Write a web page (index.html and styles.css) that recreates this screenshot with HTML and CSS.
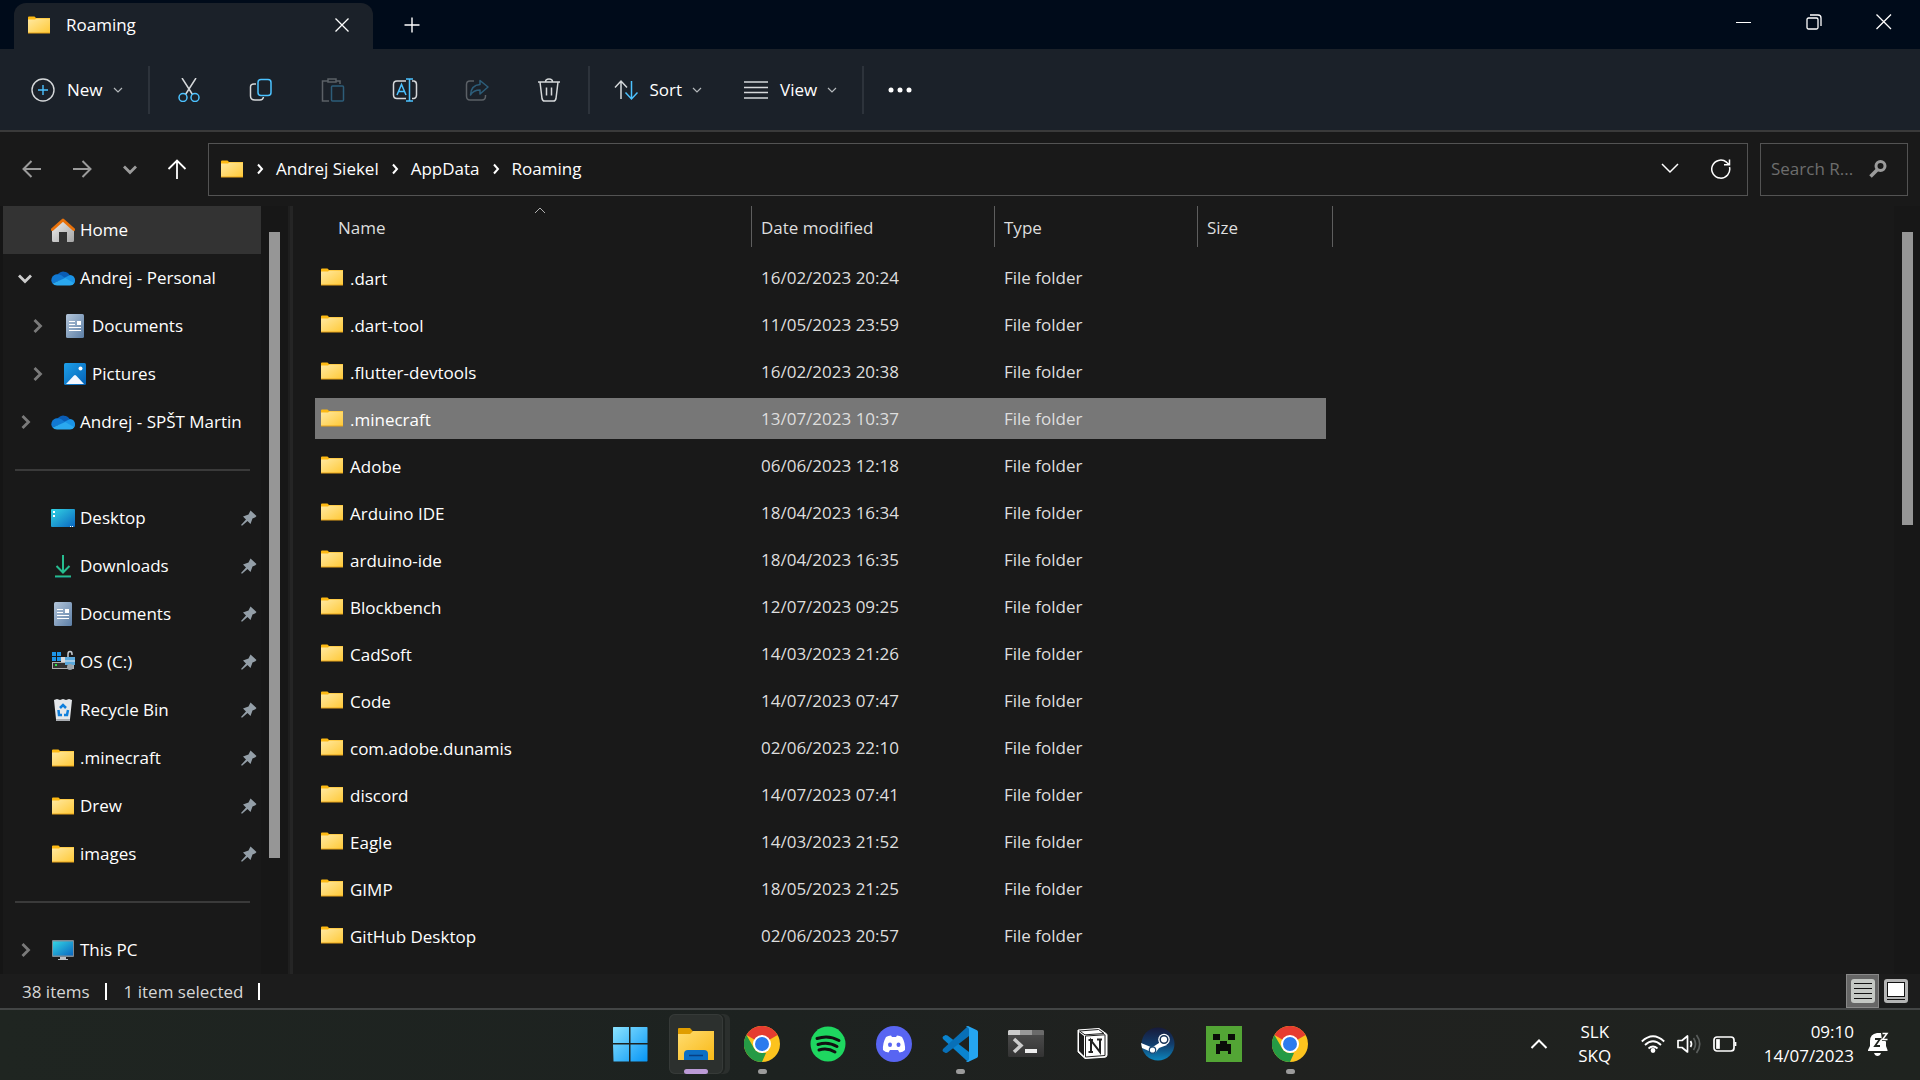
FILE: index.html
```html
<!DOCTYPE html>
<html lang="en">
<head>
  <meta charset="UTF-8">
  <title>Roaming</title>
  <meta name="viewport" content="width=device-width, initial-scale=1.0">
  <link rel="stylesheet" href="styles.css">
</head>
<body>
  <!-- Shared icons -->
  <svg class="sprite" aria-hidden="true">
    <defs>
      <linearGradient id="g-folder" x1="0" y1="0" x2="1" y2="1"><stop offset="0" stop-color="#ffe9a2"/><stop offset="1" stop-color="#ffc937"/></linearGradient>
      <linearGradient id="g-bigfolder" x1="0" y1="0" x2="1" y2="1"><stop offset="0" stop-color="#ffdc70"/><stop offset="1" stop-color="#f9b916"/></linearGradient>
      <linearGradient id="g-doc" x1="0" y1="0" x2="1" y2="1"><stop offset="0" stop-color="#b4c6da"/><stop offset="1" stop-color="#5c7ea6"/></linearGradient>
      <linearGradient id="g-pic" x1="0" y1="0" x2="1" y2="1"><stop offset="0" stop-color="#1ea0ea"/><stop offset="1" stop-color="#0461b5"/></linearGradient>
      <linearGradient id="g-desk" x1="0" y1="0" x2="1" y2="1"><stop offset="0" stop-color="#33d4e4"/><stop offset="1" stop-color="#0a66c0"/></linearGradient>
      <linearGradient id="g-win" x1="0" y1="0" x2="1" y2="1"><stop offset="0" stop-color="#8be3ff"/><stop offset="1" stop-color="#0695f5"/></linearGradient>
      <linearGradient id="g-house" x1="0" y1="0" x2="1" y2="1"><stop offset="0" stop-color="#f0f0f0"/><stop offset="1" stop-color="#a5a5a5"/></linearGradient>
      <linearGradient id="g-down" x1="0" y1="0" x2="0" y2="1"><stop offset="0" stop-color="#36cf8a"/><stop offset="1" stop-color="#12a5a0"/></linearGradient>
      <linearGradient id="g-steam" x1="0" y1="0" x2="0" y2="1"><stop offset="0" stop-color="#171a3a"/><stop offset=".5" stop-color="#123c6b"/><stop offset="1" stop-color="#0d86bd"/></linearGradient>
      <linearGradient id="g-term" x1="0" y1="0" x2="0" y2="1"><stop offset="0" stop-color="#505050"/><stop offset="1" stop-color="#333"/></linearGradient>
    </defs>
    <symbol id="folder" viewBox="0 0 24 24">
      <path d="M1 4.500Q1 3.500 2 3.500H7.500L9 5H23V10H1Z" fill="#fdb913"/>
      <path d="M1 6.500H8L9.500 5.500H23V20H1Z" fill="url(#g-folder)"/>
      <path d="M1 19.500H23V20.500H1Z" fill="#e8a41b"/>
    </symbol>
    <symbol id="home" viewBox="0 0 24 24">
      <path d="M1 11L12 1.500L23 11V22.500Q23 24 21.500 24H16V14H8V24H2.500Q1 24 1 22.500Z" fill="url(#g-house)"/>
      <path d="M1.300 11.500L12 2L22.700 11.500" fill="none" stroke="#e8710a" stroke-width="3" stroke-linecap="round" stroke-linejoin="round"/>
    </symbol>
    <symbol id="cloud" viewBox="0 0 24 24">
      <path d="M6.500 8.500A7.500 7.500 0 0 1 19 9.500L15 17H7Z" fill="#0a5cb4"/>
      <path d="M6 8.200A5.900 5.900 0 0 0 1.500 17.500L14.500 12.500Q10 8 6 8.200Z" fill="#1179d3"/>
      <path d="M13 12L19 9A5.500 5.500 0 0 1 23.500 17L20 18Z" fill="#1a93e6"/>
      <path d="M1.500 17.500L14.200 12L23.300 17.300Q22 19.500 19 19.500H6Q3 19.500 1.500 17.500Z" fill="#2aa8ef"/>
    </symbol>
    <symbol id="doc" viewBox="0 0 24 24">
      <rect x="3" width="18" height="24" rx="1.500" fill="url(#g-doc)"/>
      <path d="M6 7.500H12M6 10.500H12M6 13.500H18M6 16.500H18" stroke="#fff" stroke-width="1.200"/>
      <rect x="14" y="7" width="4" height="4" fill="#fff"/>
    </symbol>
    <symbol id="picture" viewBox="0 0 24 24">
      <rect x="1" y="1" width="22" height="22" rx="1.500" fill="url(#g-pic)"/>
      <path d="M3 22L11 13.500Q12 12.500 13 13.500L21 22Z" fill="#f3f7ff"/>
      <circle cx="17.500" cy="6.500" r="2" fill="#fff"/>
    </symbol>
    <symbol id="desktop" viewBox="0 0 24 24">
      <rect y="3" width="24" height="18" rx="1" fill="url(#g-desk)"/>
      <path d="M2 5H4V7H2ZM2 9H4V11H2ZM19 20H20V21H19ZM21 20H22V21H21Z" fill="#fff"/>
    </symbol>
    <symbol id="download" viewBox="0 0 24 24">
      <path d="M12 1V18M5.500 12L12 18.500L18.500 12" fill="none" stroke="#27bd90" stroke-width="2"/>
      <path d="M4 21.500H20V23.500H4Z" fill="url(#g-down)"/>
    </symbol>
    <symbol id="drive" viewBox="0 0 24 24">
      <path d="M1 2H5V6H1ZM6 2H10V6H6ZM1 7H5V11H1ZM6 7H10V11H6Z" fill="#1d95e8"/>
      <path d="M10 7H15V12H10Z" fill="#dadada"/>
      <rect x="1" y="12" width="22" height="7" fill="#b0b0b0"/>
      <rect x="2" y="13" width="16" height="5" fill="#333"/>
      <rect x="4" y="14" width="2" height="2" fill="#31e044"/>
      <path d="M17 8V4Q17 1.500 19 1.500T21 4V5" fill="none" stroke="#c5ccd2" stroke-width="1.500"/>
      <rect x="14" y="7" width="10" height="8" fill="#5ba9dc"/>
      <path d="M14 10H24V12H14Z" fill="#a4cae5"/>
      <circle cx="19" cy="17" r="3" fill="#9ba4ab"/>
    </symbol>
    <symbol id="bin" viewBox="0 0 24 24">
      <path d="M3 2L6 1L9 2L12 1L15 2L18 1L21 2L18.800 23H5.200Z" fill="#e4e7ea"/>
      <path d="M5 21H19L18.800 23H5.200Z" fill="#a9adb2"/>
      <path d="M9 10L12 7L15 10M17 12L16 17H13M11 17H8L7.500 12" fill="none" stroke="#0f7fdc" stroke-width="2.500"/>
    </symbol>
    <symbol id="pc" viewBox="0 0 24 24">
      <path d="M9 19H15V21H17V22H7V21H9Z" fill="#b9bec3"/>
      <rect x="1" y="2" width="22" height="17" rx="1" fill="#7e8b95"/>
      <rect x="2" y="3.500" width="20" height="14" fill="url(#g-desk)"/>
    </symbol>
    <symbol id="pin" viewBox="0 0 16 16">
      <path d="M9.500 .5L15.500 6Q14 8 11.500 8.500L9.500 14L6.500 11L1 15.800L0 15L5 9.500L2 6.500L7.500 4.500Z" fill="#949fa8"/>
    </symbol>
    <symbol id="chev-right" viewBox="0 0 14 14"><path d="M4.500 1L10.500 7L4.500 13" fill="none" stroke="currentColor" stroke-width="2.800"/></symbol>
    <symbol id="chev-down" viewBox="0 0 14 14"><path d="M1 4.500L7 10.500L13 4.500" fill="none" stroke="currentColor" stroke-width="2.800"/></symbol>
    <symbol id="caret" viewBox="0 0 10 10"><path d="M1 3L5 7L9 3" fill="none" stroke="#b4b8bb" stroke-width="1.200"/></symbol>
    <symbol id="crumb" viewBox="0 0 8 12"><path d="M2 1.500L6 6L2 10.500" fill="none" stroke="#fff" stroke-width="2"/></symbol>
    <symbol id="chrome" viewBox="0 0 36 36">
      <circle cx="18" cy="18" r="18" fill="#fcc31e"/>
      <path d="M18 18L2.400 9A18 18 0 0 1 33.600 9Z" fill="#e63c30"/>
      <path d="M2.400 9L10.200 22.500Q13 27 18 27L22 27L18 36A18 18 0 0 1 2.400 9Z" fill="#259a45"/>
      <circle cx="18" cy="18" r="9" fill="#fff"/>
      <circle cx="18" cy="18" r="7" fill="#2b7bee"/>
    </symbol>
  </svg>

  <header class="titlebar">
    <div class="tab">
      <svg class="icon24"><use href="#folder"/></svg>
      <span class="tab-title">Roaming</span>
      <button class="tab-close" aria-label="Close tab">
        <svg width="14" height="14" viewBox="0 0 14 14"><path d="M.5 .5L13.500 13.500M13.500 .5L.5 13.500" stroke="#fff" stroke-width="1.300"/></svg>
      </button>
    </div>
    <button class="tab-new" aria-label="New tab">
      <svg width="16" height="16" viewBox="0 0 16 16"><path d="M8 .5V15.500M.5 8H15.500" stroke="#fff" stroke-width="1.400"/></svg>
    </button>
    <div class="window-buttons">
      <button aria-label="Minimize"><svg width="16" height="16" viewBox="0 0 16 16"><path d="M0 8.500H15" stroke="#fff"/></svg></button>
      <button aria-label="Restore"><svg width="16" height="16" viewBox="0 0 16 16" fill="none" stroke="#fff" stroke-width="1.300"><rect x="1" y="4" width="11" height="11" rx="1.500"/><path d="M4 1H12Q15 1 15 4V12"/></svg></button>
      <button aria-label="Close"><svg width="16" height="16" viewBox="0 0 16 16"><path d="M.5 .5L15 15M15 .5L.5 15" stroke="#fff" stroke-width="1.300"/></svg></button>
    </div>
  </header>

  <div class="toolbar">
    <button class="menu-btn new-btn">
      <svg width="24" height="24" viewBox="0 0 24 24" fill="none" stroke-width="1.400"><circle cx="12" cy="12" r="11" stroke="#d5d8da"/><path d="M12 7V17M7 12H17" stroke="#4cc2ff"/></svg>
      New
      <svg class="caret"><use href="#caret"/></svg>
    </button>
    <div class="sep"></div>
    <div class="tools">
      <button aria-label="Cut">
        <svg width="24" height="24" viewBox="0 0 24 24" fill="none" stroke-width="1.500"><path d="M5 0L15.500 16.500M19 0L8.500 16.500" stroke="#d5d8da"/><circle cx="6" cy="19.500" r="4" stroke="#4cc2ff"/><circle cx="18" cy="19.500" r="4" stroke="#4cc2ff"/></svg>
      </button>
      <button aria-label="Copy">
        <svg width="24" height="24" viewBox="0 0 24 24" fill="none" stroke-width="1.500"><path d="M7 6H5Q1.500 6 1.500 9V18Q1.500 22 6 22H11Q14 22 14.500 19" stroke="#d5d8da"/><rect x="9" y="1.500" width="13" height="16" rx="3" stroke="#4cc2ff"/></svg>
      </button>
      <button aria-label="Paste" disabled>
        <svg width="24" height="24" viewBox="0 0 24 24" fill="none" stroke-width="1.500"><path d="M7 3H1.500V23H8M15 3H19V6M7 1H15V4H7Z" stroke="#5b6066"/><rect x="10.500" y="8" width="12" height="15" rx="1" stroke="#2d5d79"/></svg>
      </button>
      <button aria-label="Rename">
        <svg width="26" height="24" viewBox="0 0 26 24" fill="none" stroke-width="1.500"><path d="M14 3H5Q1.500 3 1.500 6.500V17Q1.500 20.500 5 20.500H14M20 3H22Q24.500 3.500 24.500 6.500V17Q24.500 20 22 20.500H20" stroke="#d5d8da"/><path d="M17.500 1V23M14 1H21M14 23H21M5 17L9.500 6.500L14 17M6.500 13.500H12.500" stroke="#4cc2ff"/></svg>
      </button>
      <button aria-label="Share" disabled>
        <svg width="24" height="24" viewBox="0 0 24 24" fill="none" stroke-width="1.500" stroke-linejoin="round"><path d="M9 3H5Q1.500 3 1.500 6.500V18Q1.500 22 5 22H17Q20.500 22 20.500 18V17" stroke="#5b6066"/><path d="M15 2.500L23 9L15 16V12Q8.500 12 5.500 17Q6 7 15 6.500Z" stroke="#2d5d79"/></svg>
      </button>
      <button aria-label="Delete">
        <svg width="24" height="24" viewBox="0 0 24 24" fill="none" stroke="#d5d8da" stroke-width="1.500"><path d="M1 4H23M8.500 4Q8.500 1 12 1T15.500 4M3 4L5 20.500Q5.500 23 7.500 23H16.500Q18.500 23 19 20.500L21 4M9.500 9.500V17.500M14.500 9.500V17.500"/></svg>
      </button>
    </div>
    <div class="sep"></div>
    <button class="menu-btn sort-btn">
      <svg width="24" height="24" viewBox="0 0 24 24" fill="none" stroke-width="1.500"><path d="M7 21V3M1 9.500L7 3L13 9.500" stroke="#d5d8da"/><path d="M17.500 3V21M11.500 14.500L17.500 21L23.500 14.500" stroke="#4cc2ff"/></svg>
      Sort
      <svg class="caret"><use href="#caret"/></svg>
    </button>
    <button class="menu-btn view-btn">
      <svg width="24" height="24" viewBox="0 0 24 24" stroke="#d5d8da" stroke-width="1.500"><path d="M0 4H24M0 9.500H24M0 14.500H24M0 20H24"/></svg>
      View
      <svg class="caret"><use href="#caret"/></svg>
    </button>
    <div class="sep"></div>
    <button class="more-btn" aria-label="See more">
      <svg width="24" height="6" viewBox="0 0 24 6" fill="#fff"><circle cx="3" cy="3" r="2.500"/><circle cx="12" cy="3" r="2.500"/><circle cx="21" cy="3" r="2.500"/></svg>
    </button>
  </div>

  <div class="navrow">
    <div class="history">
      <button aria-label="Back"><svg width="20" height="20" viewBox="0 0 20 20" fill="none" stroke="#9b9b9b" stroke-width="2"><path d="M19 10H2M9.500 2L1.500 10L9.500 18"/></svg></button>
      <button aria-label="Forward"><svg width="20" height="20" viewBox="0 0 20 20" fill="none" stroke="#9b9b9b" stroke-width="2"><path d="M1 10H18M10.500 2L18.500 10L10.500 18"/></svg></button>
      <button class="recent" aria-label="Recent locations"><svg width="14" height="14"><use href="#chev-down"/></svg></button>
      <button aria-label="Up"><svg width="20" height="20" viewBox="0 0 20 20" fill="none" stroke="#fff" stroke-width="1.800"><path d="M10 20V1.500M1.500 10L10 1.500L18.500 10"/></svg></button>
    </div>
    <nav class="address" aria-label="Address">
      <svg class="icon24"><use href="#folder"/></svg>
      <svg class="crumb"><use href="#crumb"/></svg>
      <a href="#">Andrej Siekel</a>
      <svg class="crumb"><use href="#crumb"/></svg>
      <a href="#">AppData</a>
      <svg class="crumb"><use href="#crumb"/></svg>
      <a href="#">Roaming</a>
      <div class="address-actions">
        <button aria-label="Previous locations"><svg width="18" height="18" viewBox="0 0 18 18"><path d="M1 4L9 12L17 4" fill="none" stroke="#fff" stroke-width="1.500"/></svg></button>
        <button aria-label="Refresh"><svg width="20" height="20" viewBox="0 0 20 20" fill="none" stroke="#fff" stroke-width="1.500"><path d="M18.500 8A9 9 0 1 1 15.500 3.200L18 5.500M18.500 .5V5.800H13"/></svg></button>
      </div>
    </nav>
    <label class="search">
      <input type="text" placeholder="Search R..." aria-label="Search Roaming">
      <svg width="18" height="18" viewBox="0 0 18 18" fill="none" stroke="#9b9b9b"><circle cx="11.500" cy="6" r="4.500" stroke-width="3"/><path d="M8 10L1.500 16.500" stroke-width="3.500"/></svg>
    </label>
  </div>

  <main class="content">
    <nav class="sidebar">
      <a class="side-item active" href="#"><svg class="chev"></svg><svg class="icon24"><use href="#home"/></svg><span>Home</span></a>
      <a class="side-item open" href="#"><svg class="chev"><use href="#chev-down"/></svg><svg class="icon24"><use href="#cloud"/></svg><span>Andrej - Personal</span></a>
      <a class="side-item child" href="#"><svg class="chev"><use href="#chev-right"/></svg><svg class="icon24"><use href="#doc"/></svg><span>Documents</span></a>
      <a class="side-item child" href="#"><svg class="chev"><use href="#chev-right"/></svg><svg class="icon24"><use href="#picture"/></svg><span>Pictures</span></a>
      <a class="side-item" href="#"><svg class="chev"><use href="#chev-right"/></svg><svg class="icon24"><use href="#cloud"/></svg><span>Andrej - SPŠT Martin</span></a>
      <hr>
      <a class="side-item" href="#"><svg class="chev"></svg><svg class="icon24"><use href="#desktop"/></svg><span>Desktop</span><svg class="pin"><use href="#pin"/></svg></a>
      <a class="side-item" href="#"><svg class="chev"></svg><svg class="icon24"><use href="#download"/></svg><span>Downloads</span><svg class="pin"><use href="#pin"/></svg></a>
      <a class="side-item" href="#"><svg class="chev"></svg><svg class="icon24"><use href="#doc"/></svg><span>Documents</span><svg class="pin"><use href="#pin"/></svg></a>
      <a class="side-item" href="#"><svg class="chev"></svg><svg class="icon24"><use href="#drive"/></svg><span>OS (C:)</span><svg class="pin"><use href="#pin"/></svg></a>
      <a class="side-item" href="#"><svg class="chev"></svg><svg class="icon24"><use href="#bin"/></svg><span>Recycle Bin</span><svg class="pin"><use href="#pin"/></svg></a>
      <a class="side-item" href="#"><svg class="chev"></svg><svg class="icon24"><use href="#folder"/></svg><span>.minecraft</span><svg class="pin"><use href="#pin"/></svg></a>
      <a class="side-item" href="#"><svg class="chev"></svg><svg class="icon24"><use href="#folder"/></svg><span>Drew</span><svg class="pin"><use href="#pin"/></svg></a>
      <a class="side-item" href="#"><svg class="chev"></svg><svg class="icon24"><use href="#folder"/></svg><span>images</span><svg class="pin"><use href="#pin"/></svg></a>
      <hr>
      <a class="side-item" href="#"><svg class="chev"><use href="#chev-right"/></svg><svg class="icon24"><use href="#pc"/></svg><span>This PC</span></a>
    </nav>
    <div class="scroll side-scroll"><div class="thumb"></div></div>
    <div class="splitter"></div>

    <section class="files">
      <table>
        <colgroup><col class="col-name"><col class="col-date"><col class="col-type"><col class="col-size"></colgroup>
        <thead>
          <tr>
            <th>Name<svg class="sort-mark" viewBox="0 0 12 7"><path d="M1 6L6 1L11 6" fill="none" stroke="#b0b0b0"/></svg></th>
            <th>Date modified</th><th>Type</th><th>Size</th>
          </tr>
        </thead>
        <tbody>
          <tr><td><svg class="icon24"><use href="#folder"/></svg>.dart</td><td>16/02/2023 20:24</td><td>File folder</td><td></td></tr>
          <tr><td><svg class="icon24"><use href="#folder"/></svg>.dart-tool</td><td>11/05/2023 23:59</td><td>File folder</td><td></td></tr>
          <tr><td><svg class="icon24"><use href="#folder"/></svg>.flutter-devtools</td><td>16/02/2023 20:38</td><td>File folder</td><td></td></tr>
          <tr class="selected"><td><svg class="icon24"><use href="#folder"/></svg>.minecraft</td><td>13/07/2023 10:37</td><td>File folder</td><td></td></tr>
          <tr><td><svg class="icon24"><use href="#folder"/></svg>Adobe</td><td>06/06/2023 12:18</td><td>File folder</td><td></td></tr>
          <tr><td><svg class="icon24"><use href="#folder"/></svg>Arduino IDE</td><td>18/04/2023 16:34</td><td>File folder</td><td></td></tr>
          <tr><td><svg class="icon24"><use href="#folder"/></svg>arduino-ide</td><td>18/04/2023 16:35</td><td>File folder</td><td></td></tr>
          <tr><td><svg class="icon24"><use href="#folder"/></svg>Blockbench</td><td>12/07/2023 09:25</td><td>File folder</td><td></td></tr>
          <tr><td><svg class="icon24"><use href="#folder"/></svg>CadSoft</td><td>14/03/2023 21:26</td><td>File folder</td><td></td></tr>
          <tr><td><svg class="icon24"><use href="#folder"/></svg>Code</td><td>14/07/2023 07:47</td><td>File folder</td><td></td></tr>
          <tr><td><svg class="icon24"><use href="#folder"/></svg>com.adobe.dunamis</td><td>02/06/2023 22:10</td><td>File folder</td><td></td></tr>
          <tr><td><svg class="icon24"><use href="#folder"/></svg>discord</td><td>14/07/2023 07:41</td><td>File folder</td><td></td></tr>
          <tr><td><svg class="icon24"><use href="#folder"/></svg>Eagle</td><td>14/03/2023 21:52</td><td>File folder</td><td></td></tr>
          <tr><td><svg class="icon24"><use href="#folder"/></svg>GIMP</td><td>18/05/2023 21:25</td><td>File folder</td><td></td></tr>
          <tr><td><svg class="icon24"><use href="#folder"/></svg>GitHub Desktop</td><td>02/06/2023 20:57</td><td>File folder</td><td></td></tr>
        </tbody>
      </table>
    </section>
    <div class="scroll file-scroll"><div class="thumb"></div></div>
  </main>

  <div class="statusbar">
    <span class="status-text">38 items</span>
    <span class="status-text">1 item selected</span>
    <div class="view-modes">
      <button class="on" aria-label="Details view"><svg width="24" height="24" viewBox="0 0 24 24"><rect width="24" height="24" rx="3" fill="#c4c8c4"/><path d="M3 4.500H21M3 9.500H21M3 14.500H21M3 19.500H21" stroke="#111" stroke-width="1.200"/></svg></button>
      <button aria-label="Large icons view"><svg width="24" height="24" viewBox="0 0 24 24"><rect width="24" height="24" rx="3" fill="#b4b4b4"/><rect x="3.500" y="3.500" width="17" height="14" fill="#fff" stroke="#111"/><path d="M3 20.500H21" stroke="#111"/></svg></button>
    </div>
  </div>

  <footer class="taskbar">
    <div class="apps">
      <button aria-label="Start"><svg width="36" height="36" viewBox="0 0 36 36"><path d="M1.500 1H17V17H1V1.500ZM18.500 1H35L35.500 1.500V17H18.500ZM1 18.500H17V35.500H1.500ZM18.500 18.500H35.500V35L35 35.500H18.500Z" fill="url(#g-win)"/></svg></button>
      <button class="current" aria-label="File Explorer"><svg width="36" height="36" viewBox="0 0 36 36"><path d="M0 3Q0 2 1 2H12L15.500 6H35V12H0Z" fill="#e09d00"/><path d="M0 8H12L15 5H36V34H0Z" fill="url(#g-bigfolder)"/><path d="M6 34V28Q6 24 10 24H26Q30 24 30 28V34Z" fill="#0d6fc4"/><path d="M11 29.500H25" stroke="#083f83" stroke-width="1.500"/></svg></button>
      <button class="running" aria-label="Google Chrome"><svg width="36" height="36"><use href="#chrome"/></svg></button>
      <button aria-label="Spotify"><svg width="36" height="36" viewBox="0 0 36 36"><circle cx="18" cy="18" r="17.500" fill="#1ed760"/><path d="M7 12.500Q18.500 8.500 29 14.500M8 18.500Q18 15 27 20.500M9 24Q17.500 21.500 25 26" fill="none" stroke="#111" stroke-width="3" stroke-linecap="round"/></svg></button>
      <button aria-label="Discord"><svg width="36" height="36" viewBox="0 0 36 36"><circle cx="18" cy="18" r="18" fill="#5865f2"/><path d="M10 11Q12 9.800 15 9.500L16 11H20L21 9.500Q24 9.800 26 11Q29.500 17 29 24Q27 26 23.500 26.500L22 24H14L12.500 26.500Q9 26 7 24Q6.500 17 10 11Z" fill="#fff"/><ellipse cx="14" cy="18.800" rx="2" ry="2.300" fill="#5865f2"/><ellipse cx="22.500" cy="18.800" rx="2" ry="2.300" fill="#5865f2"/></svg></button>
      <button class="running" aria-label="Visual Studio Code"><svg width="36" height="36" viewBox="0 0 36 36"><path d="M1 10.500L3.500 9Q4.500 9 5.500 9.500L27 26V35.500L24.500 34.500L1 13Q0 11.500 1 10.500Z" fill="#0a84cf"/><path d="M1 25.500L3.500 27Q4.500 27 5.500 26.500L27 10V.5L24.500 1.500L1 23Q0 24.500 1 25.500Z" fill="#0870b8"/><path d="M26 0L35 4.200Q36 5 36 6V30Q36 31 35 31.800L26 36Q24.500 36 24 35Q27 35 27 32.500V3.500Q27 1 24 1Q24.500 0 26 0Z" fill="#25a5f1"/></svg></button>
      <button aria-label="Terminal"><svg width="36" height="36" viewBox="0 0 36 36"><rect y="4" width="36" height="27" rx="1.500" fill="url(#g-term)"/><path d="M1 4H12V9H0V5Z" fill="#ccc"/><path d="M12 4H24V9H12Z" fill="#999"/><path d="M24 4H35L36 5V9H24Z" fill="#6a6a6a"/><path d="M6 13L13 19.500L6 26" fill="none" stroke="#ccc" stroke-width="3.500"/><rect x="17" y="23" width="12" height="4" fill="#eee"/></svg></button>
      <button aria-label="Notion"><svg width="36" height="36" viewBox="0 0 36 36"><path d="M4 4L25 2.500L32 7.500Q33 8 33 9V29Q33 31 31 31.200L11 32.500L4 26Z" fill="#fff" stroke="#fff" stroke-linejoin="round"/><path d="M5.500 5L24.500 3.500L30 7.500L11 8.800Z" fill="#fff" stroke="#222"/><path d="M5 6L10 10V30L5 25Z" fill="#1c1c1c"/><path d="M11.500 10L31 8.800V29.500L11.500 31Z" fill="#fff" stroke="#222"/><path d="M17 26V14.500L26 26V13M14.500 14H19M23 13.500H28M14.500 26H19" fill="none" stroke="#222" stroke-width="2"/></svg></button>
      <button aria-label="Steam"><svg width="36" height="36" viewBox="0 0 36 36"><circle cx="18" cy="18" r="16.500" fill="url(#g-steam)"/><path d="M1 17L12 21.500L19 17L20 12L27 19L19 22L16 26Q12 29 9 25L2 22Z" fill="#fff"/><circle cx="24" cy="13.500" r="5.800" fill="#fff"/><circle cx="24" cy="13.500" r="3.800" fill="#fff" stroke="#173358" stroke-width="1.500"/><circle cx="12.500" cy="24" r="3.200" fill="none" stroke="#1a4672" stroke-width="1.200"/></svg></button>
      <button aria-label="Minecraft Launcher"><svg width="36" height="36" viewBox="0 0 36 36" shape-rendering="crispEdges"><path d="M0 0H36V36H0Z" fill="#53a535"/><path d="M7 8H14V14H7ZM22 8H29V14H22ZM14 15H21V18H25V28H22V25H14V28H10V18H14Z" fill="#0a0d08"/></svg></button>
      <button class="running" aria-label="Google Chrome profile"><svg width="36" height="36"><use href="#chrome"/></svg></button>
    </div>
    <div class="tray">
      <button class="tray-up" aria-label="Show hidden icons"><svg width="18" height="18" viewBox="0 0 18 18"><path d="M1.500 13L9 5.500L16.500 13" fill="none" stroke="#fff" stroke-width="2"/></svg></button>
      <button class="lang">SLK<br>SKQ</button>
      <button class="quick" aria-label="Network, volume and battery">
        <svg width="24" height="24" viewBox="0 0 24 24" fill="none" stroke="#fff" stroke-width="1.800"><path d="M.8 9.500Q12 -1 23.200 9.500M4 13Q12 5.500 20 13M7.500 16.500Q12 12.500 16.500 16.500"/><circle cx="12" cy="18.500" r="1.500" fill="#fff"/></svg>
        <svg width="24" height="24" viewBox="0 0 24 24" fill="none" stroke="#fff" stroke-width="1.700" stroke-linejoin="round"><path d="M1 8.500H5L10.500 4V20L5 15.500H1Z"/><path d="M13.500 9Q15.500 12 13.500 15"/><path d="M16.500 6Q20.500 12 16.500 18M19.500 3Q26 12 19.500 21" stroke="#5a5e5c"/></svg>
        <svg width="24" height="24" viewBox="0 0 24 24" fill="none" stroke="#fff" stroke-width="1.700"><rect x="1" y="5" width="20" height="14" rx="3"/><path d="M22.500 10V14"/><rect x="4" y="8" width="2" height="8" fill="#fff"/></svg>
      </button>
      <button class="clock">09:10<br>14/07/2023</button>
      <button class="bell" aria-label="Notifications"><svg width="22" height="24" viewBox="0 0 22 24"><path d="M1 18L3 14V9Q3 2 10 1H14L19 10V14L20.500 18V19H1ZM7 21H14Q13 24 10.500 24T7 21Z" fill="#fff"/><path d="M8 7H13L8 14H13" fill="none" stroke="#20241f" stroke-width="1.800"/><path d="M14 0H21V9H15Z" fill="#20241f"/><path d="M15.500 1.500H20L15.500 7.500H20.500" fill="none" stroke="#fff" stroke-width="1.500"/></svg></button>
    </div>
  </footer>
</body>
</html>
```
FILE: styles.css
```css
* {
  box-sizing: border-box;
}

body {
  margin: 0;
  min-height: 100vh;
  display: flex;
  flex-direction: column;
  background: #191919;
  color: #fff;
  font-family: "Open Sans", "Noto Sans", sans-serif;
  font-size: 17px;
  line-height: 24px;
}

button {
  display: flex;
  align-items: center;
  justify-content: center;
  padding: 0;
  border: none;
  background: none;
  color: inherit;
  font: inherit;
}

a {
  color: inherit;
  text-decoration: none;
}

svg {
  flex-shrink: 0;
}

.sprite {
  position: absolute;
  width: 0;
  height: 0;
}

.icon24 {
  width: 24px;
  height: 24px;
}

/* title bar */
.titlebar {
  display: flex;
  height: 49px;
  padding-left: 14px;
  background: #000b1a;
}

.tab {
  display: flex;
  align-items: center;
  width: 359px;
  margin-top: 3px;
  padding: 0 24px 2px 13px;
  background: #1b2129;
  border-radius: 12px 12px 0 0;
}

.tab-title {
  margin-left: 15px;
  font-weight: 500;
}

.tab-close {
  margin-left: auto;
}

.tab-new {
  width: 78px;
}

.window-buttons {
  display: flex;
  height: 43px;
  margin-left: auto;
  padding-right: 1px;
}

.window-buttons button {
  width: 70px;
}

/* command bar */
.toolbar {
  display: flex;
  align-items: center;
  height: 83px;
  padding-left: 31px;
  background: #1b2129;
  border-bottom: 2px solid #3a3a3a;
}

.sep {
  width: 2px;
  height: 48px;
  background: #2d333b;
}

.menu-btn {
  gap: 12px;
  height: 48px;
}

.caret {
  width: 10px;
  height: 10px;
  margin-left: -2px;
}

.new-btn {
  margin-right: 25px;
}

.tools {
  display: flex;
  padding: 0 3px;
}

.tools button {
  width: 72px;
  height: 48px;
}

.sort-btn {
  margin-left: 24px;
  margin-right: 42px;
}

.view-btn {
  margin-right: 25px;
}

.more-btn {
  width: 72px;
  height: 48px;
}

/* navigation row */
.navrow {
  display: flex;
  align-items: center;
  gap: 12px;
  height: 74px;
  padding: 0 12px 0 22px;
}

.history {
  display: flex;
  align-items: center;
  justify-content: space-between;
  width: 165px;
  margin-right: 9px;
}

.recent {
  color: #9b9b9b;
}

.address {
  display: flex;
  align-items: center;
  flex: 1;
  height: 53px;
  padding-left: 11px;
  border: 1px solid #535353;
}

.crumb {
  width: 8px;
  height: 12px;
  margin: 0 12px;
}

.address-actions {
  display: flex;
  gap: 32px;
  margin-left: auto;
  padding-right: 16px;
}

.search {
  display: flex;
  align-items: center;
  width: 148px;
  height: 53px;
  padding: 0 20px 0 10px;
  border: 1px solid #535353;
}

.search input {
  flex: 1;
  min-width: 0;
  padding: 0;
  border: none;
  outline: none;
  background: none;
  color: #fff;
  font: inherit;
}

.search input::placeholder {
  color: #6d6d6d;
}

/* main area */
.content {
  display: flex;
  flex: 1;
}

.sidebar {
  width: 261px;
  border-left: 3px solid #151515;
}

.side-item {
  display: flex;
  align-items: center;
  height: 48px;
  padding: 0 4px 0 15px;
  white-space: nowrap;
}

.side-item.active {
  background: #333;
}

.side-item span {
  margin-left: 5px;
}

.side-item.child {
  padding-left: 27px;
}

.chev {
  width: 14px;
  height: 14px;
  margin-right: 19px;
  color: #7a7a7a;
}

.open .chev {
  color: #ccc;
}

.pin {
  width: 16px;
  height: 16px;
  margin-left: auto;
}

.sidebar hr {
  height: 2px;
  margin: 23px 11px 23px 12px;
  border: none;
  background: #3a3a3a;
}

.scroll {
  display: grid;
  background: #171717;
}

.side-scroll {
  grid-template-rows: 26px 625fr 116fr;
  width: 27px;
  padding: 0 8px;
}

.file-scroll {
  grid-template-rows: 26px 293fr 449fr;
  width: 26px;
  padding: 0 7px 0 8px;
}

.thumb {
  grid-row: 2;
  background: #969696;
}

.splitter {
  width: 5px;
  background: #252525;
  border-left: 2px solid #1f1f1f;
}

.files {
  flex: 1;
  padding-left: 22px;
}

table {
  table-layout: fixed;
  width: 1018px;
  border-spacing: 0;
}

.col-name {
  width: 437px;
}

.col-date {
  width: 243px;
}

.col-type {
  width: 203px;
}

th {
  position: relative;
  height: 48px;
  padding: 0 9px 5px;
  text-align: left;
  font-weight: 400;
  color: #dedede;
  background: linear-gradient(#5e5e5e, #5e5e5e) right top / 1px 41px no-repeat;
}

th:first-child {
  padding-left: 23px;
}

.sort-mark {
  position: absolute;
  top: 1px;
  left: 219px;
  width: 12px;
  height: 7px;
}

td {
  height: 47px;
  padding: 0 9px;
  border: solid transparent;
  border-width: 3px 0;
  background-clip: padding-box;
  color: #dedede;
}

td:first-child {
  padding-left: 5px;
  color: #fff;
}

td:last-child {
  border-right-width: 7px;
}

td .icon24 {
  margin-right: 6px;
  vertical-align: -4px;
}

.selected td {
  background-color: #777;
}

/* status bar */
.statusbar {
  display: flex;
  align-items: center;
  height: 36px;
  padding-left: 22px;
  background: #1c1c1c;
  border-bottom: 2px solid #434545;
  color: #d6d6d6;
}

.status-text {
  margin-right: 17px;
  padding-right: 15px;
  line-height: 17px;
  border-right: 2px solid #fff;
}

.view-modes {
  display: flex;
  align-self: stretch;
  gap: 5px;
  margin-left: auto;
  padding-right: 12px;
}

.view-modes .on {
  width: 33px;
  background: #666;
  border: 1px solid #888;
}

/* taskbar */
.taskbar {
  display: grid;
  grid-template-columns: 1fr auto 1fr;
  height: 70px;
  background: linear-gradient(90deg, #1f2521, #1d2220 40%, #20211f 65%, #1f231f);
}

.apps {
  grid-column: 2;
  display: flex;
  align-items: center;
  gap: 6px;
  padding-bottom: 2px;
}

.apps button {
  position: relative;
  width: 60px;
  height: 60px;
  border-radius: 6px;
}

/* second card edge: more than one window is open */
.apps .current {
  width: 54px;
  margin: 0 3px;
  background: #2c302e;
  box-shadow: inset 0 0 0 1px #363a38, 2px 0 0 #1f2321, 7px 0 0 #2b2f2d;
}

.running::after,
.current::after {
  content: "";
  position: absolute;
  bottom: 0;
  left: calc(50% - 4px);
  width: 9px;
  height: 5px;
  border-radius: 3px;
  background: #9b9b9b;
}

.current::after {
  left: calc(50% - 12px);
  width: 24px;
  background: #bb9ad6;
}

.tray {
  display: flex;
  align-items: center;
  justify-content: flex-end;
  padding: 0 31px 2px 0;
}

.lang {
  width: 56px;
  margin: 0 18px 0 19px;
}

.quick {
  gap: 12px;
}

.clock {
  margin: 0 13px 0 27px;
  text-align: right;
}
```
